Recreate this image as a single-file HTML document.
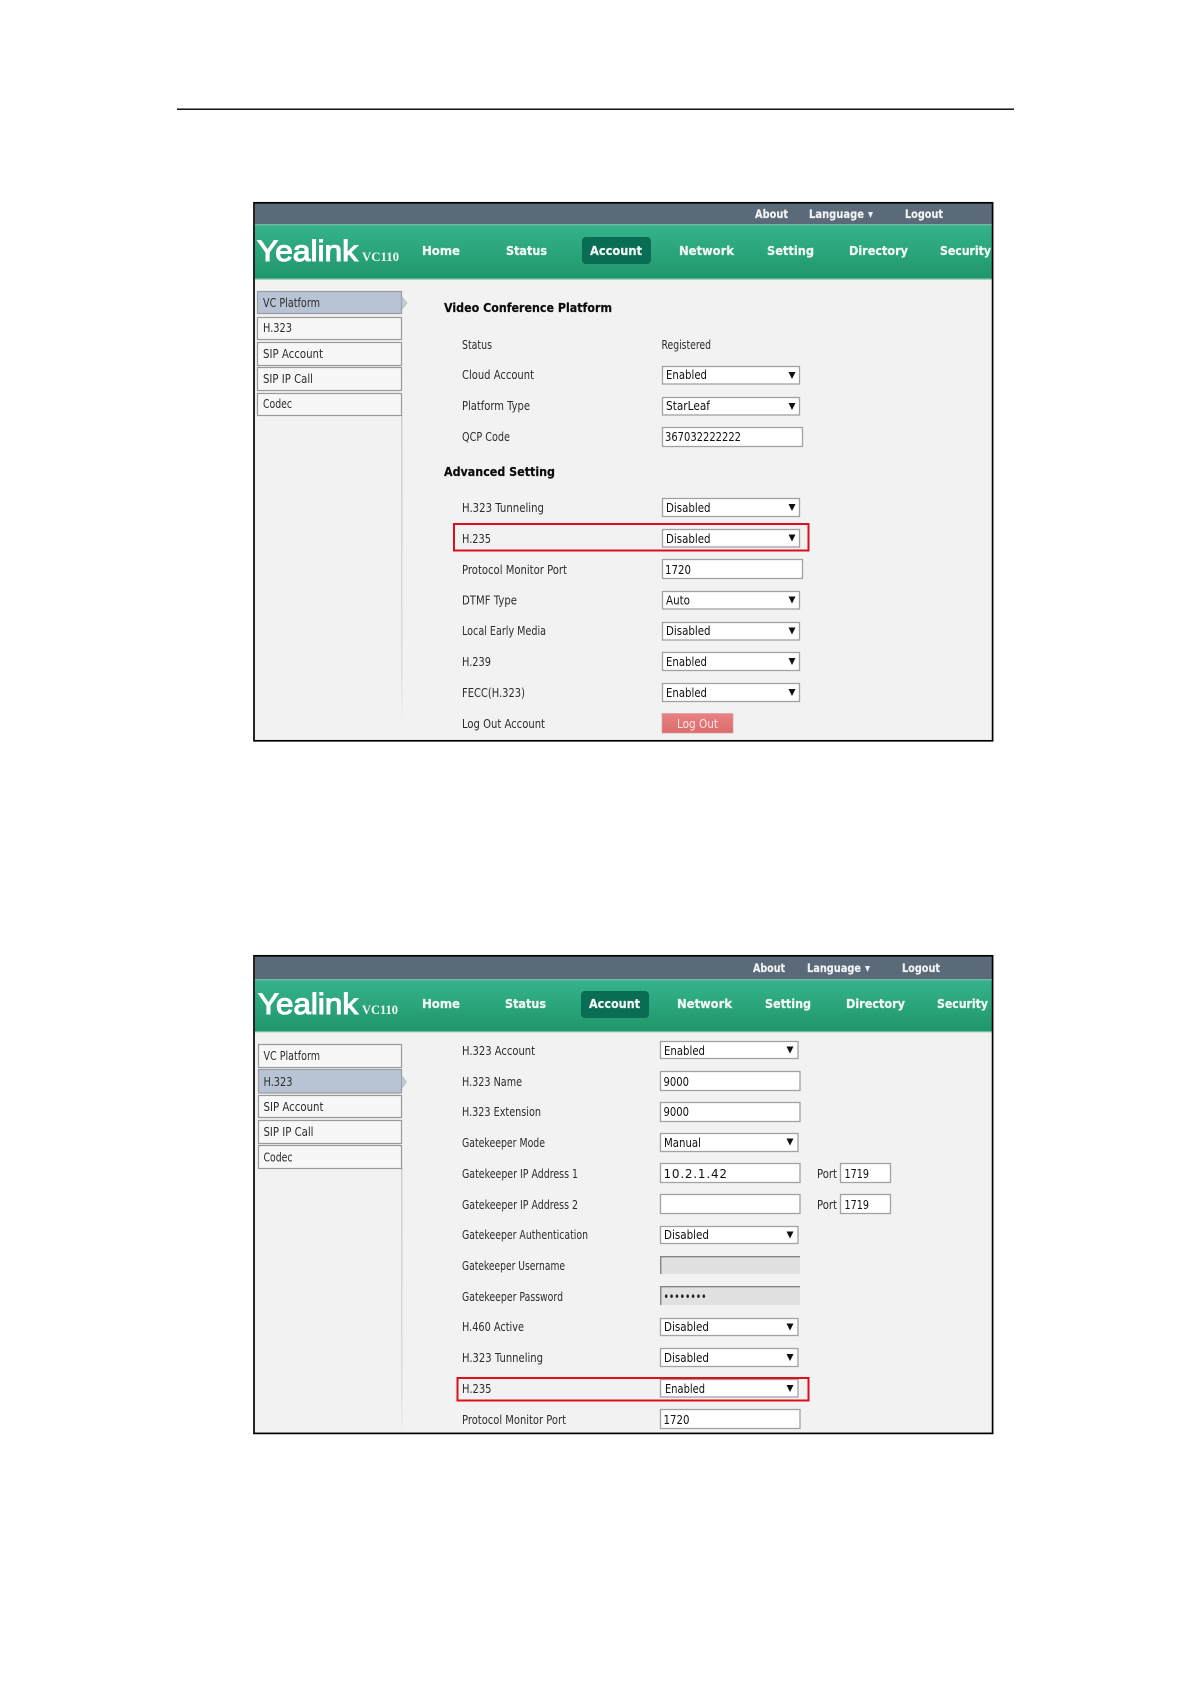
<!DOCTYPE html>
<html lang="en"><head><meta charset="utf-8"><title>Yealink VC110 H.235 settings</title>
<style>
html,body{margin:0;padding:0;background:#fff;width:1191px;height:1684px;overflow:hidden}
svg{display:block}
text{font-family:"DejaVu Sans","Liberation Sans",sans-serif;white-space:pre}
.l{font-size:12px;fill:#2c2c2c}
.v{font-size:12px;fill:#111}
.h{font-size:12.5px;font-weight:bold;fill:#0c0c0c;stroke:#0c0c0c;stroke-width:.2}
.n{font-size:12.5px;font-weight:bold;fill:#f0f8f4;stroke:#f0f8f4;stroke-width:.25}
.t{font-size:11.5px;font-weight:bold;fill:#f2f4f6;stroke:#f2f4f6;stroke-width:.15}
.logo{font-family:"Liberation Sans",sans-serif;font-size:30px;fill:#fff;stroke:#fff;stroke-width:1.1}
.vc{font-family:"Liberation Serif",serif;font-size:13px;font-weight:bold;fill:#f2f8f5}
.s{fill:#fff;stroke:#a2a2a2;stroke-width:1.3}
.b{fill:#f7f7f7;stroke:#999;stroke-width:1.2}
.a{fill:#b8c4d3;stroke:#979ca3;stroke-width:1.2}
.m{fill:#111}
.r{fill:none;stroke:#dd0f1c;stroke-width:2}
.g{filter:blur(.3px)}
</style></head><body>
<svg width="1191" height="1684" viewBox="0 0 1191 1684" xmlns="http://www.w3.org/2000/svg">
<defs>
<linearGradient id="gr" x1="0" y1="0" x2="0" y2="1"><stop offset="0" stop-color="#36b38c"/><stop offset="1" stop-color="#1f9669"/></linearGradient>
<linearGradient id="dv" x1="0" y1="0" x2="0" y2="1"><stop offset="0" stop-color="#cfcfcf"/><stop offset=".8" stop-color="#dadada"/><stop offset="1" stop-color="#f0f0f0"/></linearGradient>
<linearGradient id="lo" x1="0" y1="0" x2="0" y2="1"><stop offset="0" stop-color="#e88282"/><stop offset="1" stop-color="#dc6a6c"/></linearGradient>
</defs>
<rect x="177" y="108.5" width="837" height="1.4" fill="#000"/>

<!-- FIRST SCREENSHOT -->
<g class="g">
<rect x="254" y="203" width="738.5" height="538" fill="#f2f2f2"/>
<rect x="255" y="203" width="737.5" height="21" fill="#5b6a79"/>
<rect x="255" y="224" width="737.5" height="55.5" fill="url(#gr)"/>
<rect x="255" y="224" width="737.5" height="1.5" fill="#6dbba2"/>
<rect x="255" y="278.3" width="737.5" height="1.3" fill="#6cc0a2"/>
<text class="t" x="755" y="218" textLength="33" lengthAdjust="spacingAndGlyphs">About</text>
<text class="t" x="809" y="218" textLength="55" lengthAdjust="spacingAndGlyphs">Language</text>
<polygon points="868,212 873,212 870.5,218" fill="#eef1f3"/>
<text class="t" x="905" y="218" textLength="38" lengthAdjust="spacingAndGlyphs">Logout</text>
<text class="logo" x="257" y="261" textLength="101" lengthAdjust="spacingAndGlyphs">Yealink</text>
<text class="vc" x="362" y="261" textLength="37" lengthAdjust="spacingAndGlyphs">VC110</text>
<rect x="582" y="237" width="69" height="27" rx="4" fill="#086d52"/>
<text class="n" x="422" y="255" textLength="38" lengthAdjust="spacingAndGlyphs">Home</text>
<text class="n" x="506" y="255" textLength="41" lengthAdjust="spacingAndGlyphs">Status</text>
<text class="n" x="590" y="255" textLength="52" lengthAdjust="spacingAndGlyphs">Account</text>
<text class="n" x="679" y="255" textLength="55" lengthAdjust="spacingAndGlyphs">Network</text>
<text class="n" x="767" y="255" textLength="47" lengthAdjust="spacingAndGlyphs">Setting</text>
<text class="n" x="849" y="255" textLength="59" lengthAdjust="spacingAndGlyphs">Directory</text>
<text class="n" x="940" y="255" textLength="51" lengthAdjust="spacingAndGlyphs">Security</text>

<rect x="401" y="415" width="1.5" height="305" fill="url(#dv)"/>
<rect class="a" x="257.5" y="291.5" width="144" height="22"/>
<polygon points="402,297 407,303 402,309" fill="#c4cdd9" stroke="#b0b6be" stroke-width=".7"/>
<rect class="b" x="257.5" y="317.5" width="144" height="22"/>
<rect class="b" x="257.5" y="342.5" width="144" height="23"/>
<rect class="b" x="257.5" y="367.5" width="144" height="23"/>
<rect class="b" x="257.5" y="393.5" width="144" height="22"/>
<text class="l" x="263" y="307" textLength="57" lengthAdjust="spacingAndGlyphs">VC Platform</text>
<text class="l" x="263" y="332" textLength="29" lengthAdjust="spacingAndGlyphs">H.323</text>
<text class="l" x="263" y="358" textLength="60" lengthAdjust="spacingAndGlyphs">SIP Account</text>
<text class="l" x="263" y="383" textLength="50" lengthAdjust="spacingAndGlyphs">SIP IP Call</text>
<text class="l" x="263" y="408" textLength="29" lengthAdjust="spacingAndGlyphs">Codec</text>

<text class="h" x="444" y="312" textLength="168" lengthAdjust="spacingAndGlyphs">Video Conference Platform</text>
<text class="h" x="444" y="476" textLength="111" lengthAdjust="spacingAndGlyphs">Advanced Setting</text>

<text class="l" x="462" y="349" textLength="30" lengthAdjust="spacingAndGlyphs">Status</text>
<text class="l" x="462" y="379" textLength="72" lengthAdjust="spacingAndGlyphs">Cloud Account</text>
<text class="l" x="462" y="410" textLength="68" lengthAdjust="spacingAndGlyphs">Platform Type</text>
<text class="l" x="462" y="441" textLength="48" lengthAdjust="spacingAndGlyphs">QCP Code</text>
<text class="l" x="462" y="512" textLength="82" lengthAdjust="spacingAndGlyphs">H.323 Tunneling</text>
<text class="l" x="462" y="543" textLength="29" lengthAdjust="spacingAndGlyphs">H.235</text>
<text class="l" x="462" y="574" textLength="105" lengthAdjust="spacingAndGlyphs">Protocol Monitor Port</text>
<text class="l" x="462" y="604.5" textLength="55" lengthAdjust="spacingAndGlyphs">DTMF Type</text>
<text class="l" x="462" y="635" textLength="84" lengthAdjust="spacingAndGlyphs">Local Early Media</text>
<text class="l" x="462" y="666" textLength="29" lengthAdjust="spacingAndGlyphs">H.239</text>
<text class="l" x="462" y="697" textLength="63" lengthAdjust="spacingAndGlyphs">FECC(H.323)</text>
<text class="l" x="462" y="728" textLength="83" lengthAdjust="spacingAndGlyphs">Log Out Account</text>

<text class="l" x="661.5" y="349" textLength="49.5" lengthAdjust="spacingAndGlyphs">Registered</text>

<rect class="s" x="662.5" y="366.5" width="137" height="17.5"/>
<rect class="s" x="662.5" y="397.5" width="137" height="17.5"/>
<rect class="s" x="662.5" y="427.5" width="140" height="19"/>
<rect class="s" x="662.5" y="498.5" width="137" height="18"/>
<rect class="s" x="662.5" y="529.5" width="137" height="17.5"/>
<rect class="s" x="662.5" y="559.5" width="140" height="19"/>
<rect class="s" x="662.5" y="591.5" width="137" height="17.5"/>
<rect class="s" x="662.5" y="622.5" width="137" height="17.5"/>
<rect class="s" x="662.5" y="652.5" width="137" height="18"/>
<rect class="s" x="662.5" y="683.5" width="137" height="18"/>

<text class="v" x="666" y="379" textLength="41" lengthAdjust="spacingAndGlyphs">Enabled</text>
<text class="v" x="666" y="410" textLength="44" lengthAdjust="spacingAndGlyphs">StarLeaf</text>
<text class="v" x="665" y="441" textLength="76" lengthAdjust="spacingAndGlyphs">367032222222</text>
<text class="v" x="666" y="512" textLength="44.5" lengthAdjust="spacingAndGlyphs">Disabled</text>
<text class="v" x="666" y="543" textLength="44.5" lengthAdjust="spacingAndGlyphs">Disabled</text>
<text class="v" x="665" y="574" textLength="26" lengthAdjust="spacingAndGlyphs">1720</text>
<text class="v" x="666" y="604.5" textLength="24" lengthAdjust="spacingAndGlyphs">Auto</text>
<text class="v" x="666" y="635" textLength="44.5" lengthAdjust="spacingAndGlyphs">Disabled</text>
<text class="v" x="666" y="666" textLength="41" lengthAdjust="spacingAndGlyphs">Enabled</text>
<text class="v" x="666" y="697" textLength="41" lengthAdjust="spacingAndGlyphs">Enabled</text>

<polygon class="m" points="788.5,372 795.5,372 792,379"/>
<polygon class="m" points="788.5,403 795.5,403 792,410"/>
<polygon class="m" points="788.5,504 795.5,504 792,511"/>
<polygon class="m" points="788.5,534.5 795.5,534.5 792,541.5"/>
<polygon class="m" points="788.5,596.5 795.5,596.5 792,603.5"/>
<polygon class="m" points="788.5,627.5 795.5,627.5 792,634.5"/>
<polygon class="m" points="788.5,658 795.5,658 792,665"/>
<polygon class="m" points="788.5,689 795.5,689 792,696"/>

<rect x="662" y="713.5" width="71" height="19.5" fill="url(#lo)" stroke="#d4a0a0" stroke-width=".7"/>
<text class="v" style="fill:#fde9e9" x="677" y="728" textLength="41" lengthAdjust="spacingAndGlyphs">Log Out</text>
<rect class="r" x="454" y="524" width="354.5" height="26.5"/>
</g>
<rect x="254" y="202.8" width="738.6" height="538" fill="none" stroke="#000" stroke-width="1.7"/>

<!-- SECOND SCREENSHOT -->
<g class="g">
<rect x="254" y="956" width="738.5" height="477" fill="#f2f2f2"/>
<rect x="255" y="956" width="737.5" height="23" fill="#5b6a79"/>
<rect x="255" y="979" width="737.5" height="53" fill="url(#gr)"/>
<rect x="255" y="979" width="737.5" height="1.5" fill="#6dbba2"/>
<rect x="255" y="1031" width="737.5" height="1.3" fill="#6cc0a2"/>
<text class="t" x="753" y="972" textLength="32" lengthAdjust="spacingAndGlyphs">About</text>
<text class="t" x="807" y="972" textLength="54" lengthAdjust="spacingAndGlyphs">Language</text>
<polygon points="865,966 870,966 867.5,972" fill="#eef1f3"/>
<text class="t" x="902" y="972" textLength="38" lengthAdjust="spacingAndGlyphs">Logout</text>
<text class="logo" x="258" y="1014" textLength="100" lengthAdjust="spacingAndGlyphs">Yealink</text>
<text class="vc" x="362" y="1014" textLength="36" lengthAdjust="spacingAndGlyphs">VC110</text>
<rect x="581" y="991" width="68" height="27" rx="4" fill="#086d52"/>
<text class="n" x="422" y="1008" textLength="38" lengthAdjust="spacingAndGlyphs">Home</text>
<text class="n" x="505" y="1008" textLength="41" lengthAdjust="spacingAndGlyphs">Status</text>
<text class="n" x="589" y="1008" textLength="51" lengthAdjust="spacingAndGlyphs">Account</text>
<text class="n" x="677" y="1008" textLength="55" lengthAdjust="spacingAndGlyphs">Network</text>
<text class="n" x="765" y="1008" textLength="46" lengthAdjust="spacingAndGlyphs">Setting</text>
<text class="n" x="846" y="1008" textLength="59" lengthAdjust="spacingAndGlyphs">Directory</text>
<text class="n" x="937" y="1008" textLength="51" lengthAdjust="spacingAndGlyphs">Security</text>

<rect x="401" y="1168" width="1.5" height="265" fill="url(#dv)"/>
<rect class="b" x="258.5" y="1044.5" width="143" height="23"/>
<rect class="a" x="258.5" y="1069.5" width="143" height="23.5"/>
<polygon points="402,1076 406.5,1082 402,1088" fill="#c4cdd9" stroke="#b0b6be" stroke-width=".7"/>
<rect class="b" x="258.5" y="1095.5" width="143" height="22"/>
<rect class="b" x="258.5" y="1120.5" width="143" height="23"/>
<rect class="b" x="258.5" y="1145.5" width="143" height="23"/>
<text class="l" x="263.5" y="1060" textLength="56.5" lengthAdjust="spacingAndGlyphs">VC Platform</text>
<text class="l" x="263.5" y="1086" textLength="29" lengthAdjust="spacingAndGlyphs">H.323</text>
<text class="l" x="263.5" y="1111" textLength="60" lengthAdjust="spacingAndGlyphs">SIP Account</text>
<text class="l" x="263.5" y="1136" textLength="50" lengthAdjust="spacingAndGlyphs">SIP IP Call</text>
<text class="l" x="263.5" y="1161.5" textLength="29" lengthAdjust="spacingAndGlyphs">Codec</text>

<text class="l" x="462" y="1055" textLength="73" lengthAdjust="spacingAndGlyphs">H.323 Account</text>
<text class="l" x="462" y="1086" textLength="60" lengthAdjust="spacingAndGlyphs">H.323 Name</text>
<text class="l" x="462" y="1116" textLength="79" lengthAdjust="spacingAndGlyphs">H.323 Extension</text>
<text class="l" x="462" y="1147" textLength="83" lengthAdjust="spacingAndGlyphs">Gatekeeper Mode</text>
<text class="l" x="462" y="1178" textLength="116" lengthAdjust="spacingAndGlyphs">Gatekeeper IP Address 1</text>
<text class="l" x="462" y="1209" textLength="116" lengthAdjust="spacingAndGlyphs">Gatekeeper IP Address 2</text>
<text class="l" x="462" y="1239" textLength="126" lengthAdjust="spacingAndGlyphs">Gatekeeper Authentication</text>
<text class="l" x="462" y="1270" textLength="103" lengthAdjust="spacingAndGlyphs">Gatekeeper Username</text>
<text class="l" x="462" y="1301" textLength="101" lengthAdjust="spacingAndGlyphs">Gatekeeper Password</text>
<text class="l" x="462" y="1331" textLength="62" lengthAdjust="spacingAndGlyphs">H.460 Active</text>
<text class="l" x="462" y="1362" textLength="81" lengthAdjust="spacingAndGlyphs">H.323 Tunneling</text>
<text class="l" x="462" y="1393" textLength="29.5" lengthAdjust="spacingAndGlyphs">H.235</text>
<text class="l" x="462" y="1424" textLength="104" lengthAdjust="spacingAndGlyphs">Protocol Monitor Port</text>

<rect class="s" x="660.5" y="1041.5" width="137.5" height="17"/>
<rect class="s" x="660.5" y="1071.5" width="139.5" height="19"/>
<rect class="s" x="660.5" y="1102.5" width="139.5" height="19"/>
<rect class="s" x="660.5" y="1133.5" width="137.5" height="18"/>
<rect class="s" x="660.5" y="1163.5" width="139.5" height="19"/>
<rect class="s" x="660.5" y="1194.5" width="139.5" height="19"/>
<rect class="s" x="840.5" y="1163.5" width="50" height="19"/>
<rect class="s" x="840.5" y="1194.5" width="50" height="19"/>
<rect class="s" x="660.5" y="1226.5" width="137.5" height="17"/>
<rect x="660" y="1256" width="140" height="18" fill="#e1e1e1"/>
<path d="M660.7 1274V1256.7H800" fill="none" stroke="#858585" stroke-width="1.4"/>
<rect x="660" y="1286" width="140" height="19" fill="#e1e1e1"/>
<path d="M660.7 1305V1286.7H800" fill="none" stroke="#858585" stroke-width="1.4"/>
<rect class="s" x="660.5" y="1318.5" width="137.5" height="17"/>
<rect class="s" x="660.5" y="1348.5" width="137.5" height="18"/>
<rect class="s" x="660.5" y="1379.5" width="137.5" height="17.5"/>
<rect class="s" x="660.5" y="1409.5" width="139.5" height="19"/>

<text class="v" x="664" y="1055" textLength="41" lengthAdjust="spacingAndGlyphs">Enabled</text>
<text class="v" x="663.5" y="1086" textLength="25.5" lengthAdjust="spacingAndGlyphs">9000</text>
<text class="v" x="663.5" y="1116" textLength="25.5" lengthAdjust="spacingAndGlyphs">9000</text>
<text class="v" x="664" y="1147" textLength="37" lengthAdjust="spacingAndGlyphs">Manual</text>
<text class="v" x="663.5" y="1178" textLength="63.5" lengthAdjust="spacing">10.2.1.42</text>
<text class="l" x="817" y="1178" textLength="20" lengthAdjust="spacingAndGlyphs">Port</text>
<text class="l" x="817" y="1209" textLength="20" lengthAdjust="spacingAndGlyphs">Port</text>
<text class="v" x="844.5" y="1178" textLength="24.5" lengthAdjust="spacingAndGlyphs">1719</text>
<text class="v" x="844.5" y="1209" textLength="24.5" lengthAdjust="spacingAndGlyphs">1719</text>
<text class="v" x="664" y="1239" textLength="45" lengthAdjust="spacingAndGlyphs">Disabled</text>
<text x="663.5" y="1301" font-size="12" fill="#222" textLength="43" lengthAdjust="spacingAndGlyphs">••••••••</text>
<text class="v" x="664" y="1331" textLength="45" lengthAdjust="spacingAndGlyphs">Disabled</text>
<text class="v" x="664" y="1362" textLength="45" lengthAdjust="spacingAndGlyphs">Disabled</text>
<text class="v" x="665" y="1393" textLength="40" lengthAdjust="spacingAndGlyphs">Enabled</text>
<text class="v" x="663.5" y="1424" textLength="26" lengthAdjust="spacingAndGlyphs">1720</text>

<polygon class="m" points="786.5,1046.5 793.5,1046.5 790,1053.5"/>
<polygon class="m" points="786.5,1138.5 793.5,1138.5 790,1145.5"/>
<polygon class="m" points="786.5,1231.5 793.5,1231.5 790,1238.5"/>
<polygon class="m" points="786.5,1323.5 793.5,1323.5 790,1330.5"/>
<polygon class="m" points="786.5,1354 793.5,1354 790,1361"/>
<polygon class="m" points="786.5,1385 793.5,1385 790,1392"/>
<rect class="r" x="457.5" y="1378" width="351" height="22.5"/>
</g>
<rect x="254" y="955.8" width="738.6" height="477.6" fill="none" stroke="#000" stroke-width="1.7"/>
</svg>
</body></html>
